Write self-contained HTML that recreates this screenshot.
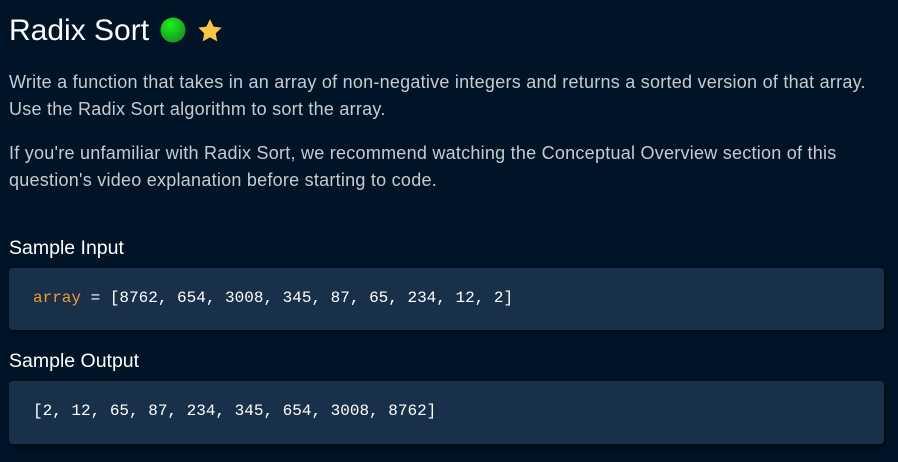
<!DOCTYPE html>
<html><head><meta charset="utf-8"><style>
html,body{margin:0;padding:0;width:898px;height:462px;background:#011427;overflow:hidden;font-family:"Liberation Sans",sans-serif;}
.t{position:absolute;white-space:nowrap;}
h1{position:absolute;left:9px;top:11px;margin:0;font-size:30px;font-weight:normal;color:#fff;line-height:40px;}
.p{color:#c6cbd2;font-size:18px;letter-spacing:0.25px;left:9px;}
.h{color:#fff;font-size:19.5px;left:9px;}
.box{position:absolute;left:9px;width:875px;background:#19304b;border-radius:4px;box-shadow:2px 3px 6px rgba(0,0,0,.5);}
.code{position:absolute;left:33px;font-family:"Liberation Mono",monospace;font-size:16px;color:#fff;white-space:pre;}
</style></head><body>
<h1>Radix Sort</h1>
<svg style="position:absolute;left:160px;top:17px" width="28" height="28"><defs><radialGradient id="g" cx="40%" cy="30%" r="70%"><stop offset="0" stop-color="#1ef01e"/><stop offset="1" stop-color="#169a1e"/></radialGradient></defs><circle cx="13" cy="13" r="12.5" fill="url(#g)"/></svg>
<svg style="position:absolute;left:197px;top:18px" width="26" height="25" viewBox="0 0 24 23"><path d="M12 1l3.3 6.9 7.5 1-5.5 5.2 1.4 7.4L12 17.9l-6.7 3.6 1.4-7.4L1.2 8.9l7.5-1z" fill="#f7c548"/></svg>
<div class="t p" style="top:72px">Write a function that takes in an array of non-negative integers and returns a sorted version of that array.</div>
<div class="t p" style="top:99px">Use the Radix Sort algorithm to sort the array.</div>
<div class="t p" style="top:143px">If you're unfamiliar with Radix Sort, we recommend watching the Conceptual Overview section of this</div>
<div class="t p" style="top:170px">question's video explanation before starting to code.</div>
<div class="t h" style="top:237px">Sample Input</div>
<div class="box" style="top:268px;height:62px"></div>
<div class="code" style="top:289px"><span style="color:#f29b2f">array</span> = [8762, 654, 3008, 345, 87, 65, 234, 12, 2]</div>
<div class="t h" style="top:350px">Sample Output</div>
<div class="box" style="top:381px;height:63px"></div>
<div class="code" style="top:402px">[2, 12, 65, 87, 234, 345, 654, 3008, 8762]</div>
</body></html>
